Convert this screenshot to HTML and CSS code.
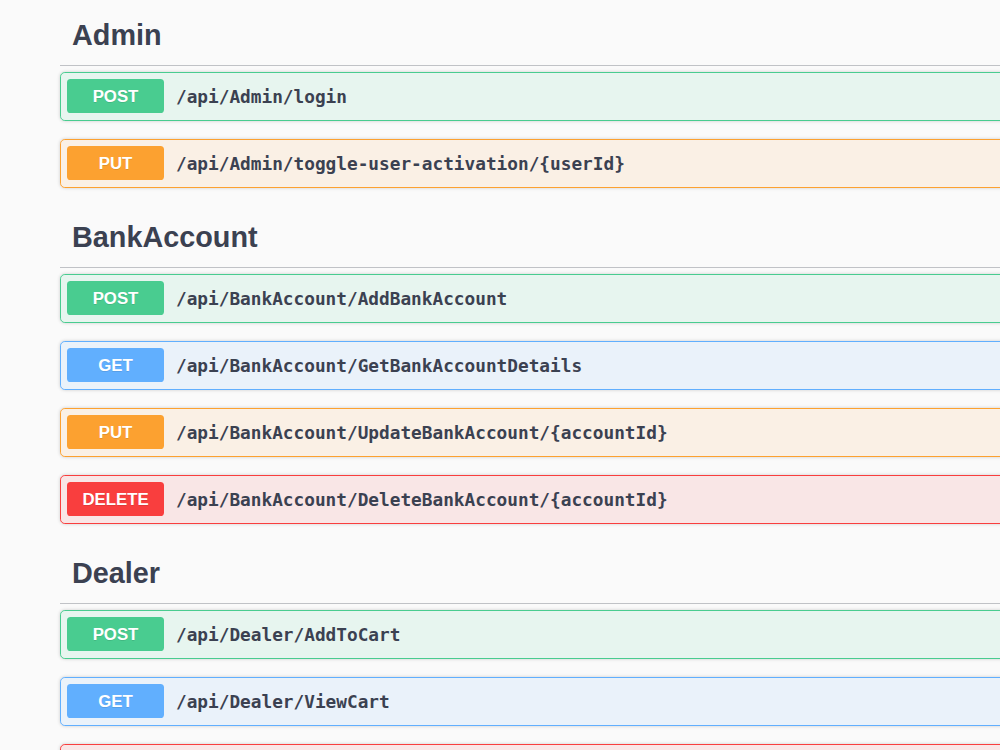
FILE: index.html
```html
<!DOCTYPE html>
<html lang="en">
<head>
    <meta charset="UTF-8">
    <title>Swagger UI</title>
    <link rel="stylesheet" href="styles.css">
</head>
<body>
<div class="wrapper">
    <div class="tag-section">
        <h3 class="tag">Admin</h3>
        <div class="opblock post">
            <span class="method">POST</span>
            <span class="path">/api/Admin/login</span>
        </div>
        <div class="opblock put">
            <span class="method">PUT</span>
            <span class="path">/api/Admin/toggle-user-activation/{userId}</span>
        </div>
    </div>

    <div class="tag-section">
        <h3 class="tag">BankAccount</h3>
        <div class="opblock post">
            <span class="method">POST</span>
            <span class="path">/api/BankAccount/AddBankAccount</span>
        </div>
        <div class="opblock get">
            <span class="method">GET</span>
            <span class="path">/api/BankAccount/GetBankAccountDetails</span>
        </div>
        <div class="opblock put">
            <span class="method">PUT</span>
            <span class="path">/api/BankAccount/UpdateBankAccount/{accountId}</span>
        </div>
        <div class="opblock delete">
            <span class="method">DELETE</span>
            <span class="path">/api/BankAccount/DeleteBankAccount/{accountId}</span>
        </div>
    </div>

    <div class="tag-section">
        <h3 class="tag">Dealer</h3>
        <div class="opblock post">
            <span class="method">POST</span>
            <span class="path">/api/Dealer/AddToCart</span>
        </div>
        <div class="opblock get">
            <span class="method">GET</span>
            <span class="path">/api/Dealer/ViewCart</span>
        </div>
        <!-- next row only shows its top edge -->
        <div class="opblock delete empty"></div>
    </div>
</div>
</body>
</html>
```

FILE: styles.css
```css
*{
    margin: 0;
    padding: 0;
    box-sizing: border-box;
}
html, body{
    overflow: hidden;
}
body{
    background: #fafafa;
    font-family: "Liberation Sans", Arial, sans-serif;
    color: #3b4151;
}
.wrapper{
    width: 1100px;
    padding: 4px 0 0 60px;
}
.tag{
    font-size: 28.8px;
    font-weight: 700;
    line-height: 37px;
    padding: 13px 24px 11px 12px;
    margin-bottom: 6px;
    border-bottom: 1px solid rgba(59, 65, 81, .3);
    color: #3b4151;
}
.opblock{
    display: flex;
    align-items: center;
    padding: 6px 6px 7px;
    margin-bottom: 18px;
    border: 1px solid #000;
    border-radius: 4.8px;
    box-shadow: 0 0 3.6px rgba(0, 0, 0, .19);
}
.opblock.empty{
    height: 49px;
}
.method{
    min-width: 97px;
    padding: 8px 0 6px;
    line-height: 20px;
    text-align: center;
    font-size: 16.8px;
    font-weight: 700;
    color: #fff;
    border-radius: 3.6px;
    text-shadow: 0 1px 0 rgba(0, 0, 0, .1);
}
.path{
    padding: 2px 12px 0;
    font-family: "DejaVu Sans Mono", monospace;
    font-size: 17.75px;
    font-weight: 600;
    color: #3b4151;
    white-space: nowrap;
}
.post{
    border-color: #49cc90;
    background: rgba(73, 204, 144, .1);
}
.post .method{
    background: #49cc90;
}
.put{
    border-color: #fca130;
    background: rgba(252, 161, 48, .1);
}
.put .method{
    background: #fca130;
}
.get{
    border-color: #61affe;
    background: rgba(97, 175, 254, .1);
}
.get .method{
    background: #61affe;
}
.delete{
    border-color: #f93e3e;
    background: rgba(249, 62, 62, .1);
}
.delete .method{
    background: #f93e3e;
}
```
